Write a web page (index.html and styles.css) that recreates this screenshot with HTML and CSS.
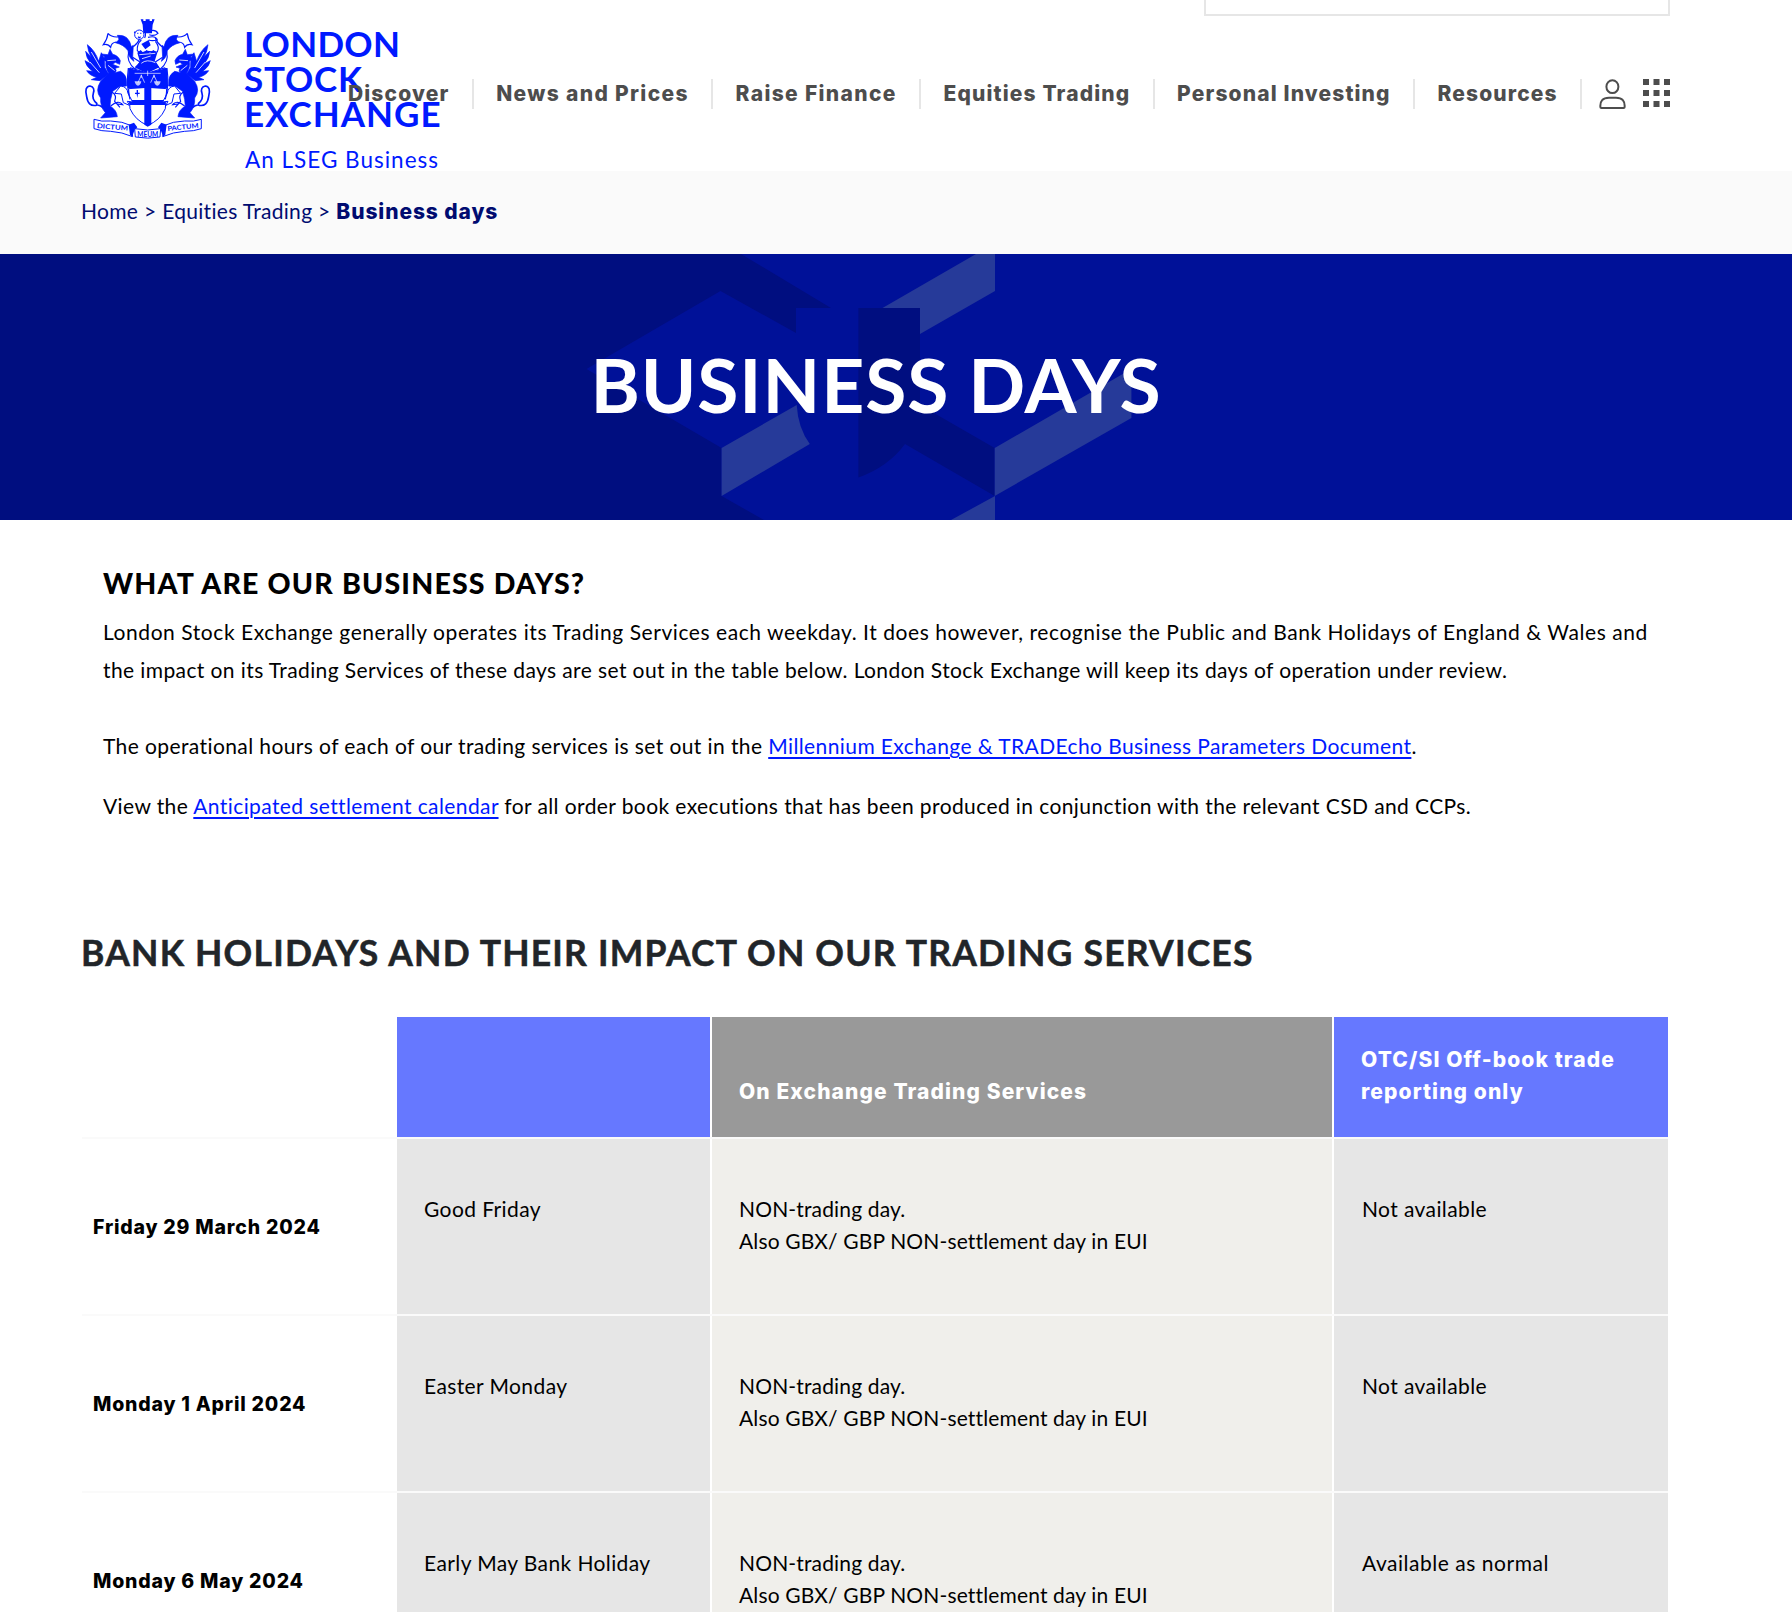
FILE: index.html
```html
<!DOCTYPE html>
<html lang="en">
<head>
<meta charset="utf-8">
<title>Business days</title>
<link rel="stylesheet" href="styles.css">
</head>
<body>
<header class="header">
  <div class="logo">
    <svg class="crest" viewBox="0 0 406 396" aria-hidden="true">
      <defs>
        <g id="side">
          <path d="M22 98Q46 116 56 148L64 122Q76 140 74 166L86 186 60 206 34 203 50 196Q28 190 20 176L38 178Q18 164 15 146L34 156Q18 138 17 118L33 134Q24 118 22 98Z" class="f"/>
          <path d="M64 126L84 128 90 112 98 127Q114 130 121 146L119 157 106 151 98 157 118 165 106 169Q112 178 104 182L122 178Q138 188 139 202L140 222 118 224 98 238 92 262 90 282Q110 294 112 314L62 318 76 302Q60 284 62 258 44 236 62 208L86 184Q74 164 78 148L64 142 74 135Z" class="f"/>
          <path d="M122 222Q142 224 144 244L158 270 142 268 148 280 130 272 124 246 104 244Z" class="o"/>
          <path d="M92 282Q116 262 128 278L112 276M96 240Q112 250 104 268L120 286" class="s"/>
          <path d="M82 146L108 144M84 160L104 176M34 120L62 168M30 150L58 182" class="w"/>
          <path d="M70 288Q56 276 48 280 24 284 20 254 12 224 30 222 46 226 40 244 34 262 52 276" class="s tail"/>
          <path d="M84 64Q82 82 70 98 84 94 92 106 94 92 108 90M84 64Q96 78 120 74" class="s"/>
          <path d="M112 70Q146 66 154 104L160 100 158 136 162 148Q146 138 144 116 132 98 106 92 124 84 112 70Z" class="f"/>
          <path d="M160 104Q174 94 180 78M146 120Q138 150 166 172L180 150 158 136" class="s"/>
          <path d="M145 174L152 168 180 176 203 184M145 168Q138 220 150 262" class="s"/>
          <path d="M42 322Q64 330 92 327 128 328 154 341L158 374Q126 360 92 358 64 358 42 350Z" class="o"/>
          <path d="M146 338L162 332 172 346 164 354 156 374 150 368Z"/>
          <path d="M184 188L184 198M174 212L184 190 194 212" class="wt"/>
          <path d="M164 208H184Q182 220 174 221 166 220 164 208Z" class="wf"/>
        </g>
      </defs>
      <path d="M146 230L203 226 260 230 256 290Q240 326 203 340 166 326 150 290Z" class="o"/>
      <path d="M145 168L203 182 261 168 264 228H143ZM193 226H214V338L203 344 193 338ZM150 264H256V279H150ZM170 234H174V242H179V246H174L172 258 170 246H165V242H170Z"/>
      <use href="#side"/>
      <use href="#side" transform="matrix(-1 0 0 1 406 0)"/>
      <path d="M182 22H190V27H197V22H209V27H216V22H224L218 38 216 64H190L188 38Z"/>
      <circle cx="178" cy="68" r="14" class="o"/>
      <path d="M172 64h3M181 64h3M174 74l4 3 4-3M166 58l-3 5M192 56Q200 64 194 78M196 48H210M206 58Q226 50 234 64 222 74 208 68M204 76Q228 70 232 84 216 88 206 84M184 84Q170 96 172 116L182 124 200 118 232 120Q240 104 226 88" class="s"/>
      <path d="M184 96L206 84 212 100 196 112ZM172 122L182 114 190 122 200 114 210 122 220 114 232 122 224 148 238 166 214 178 203 184 184 176 164 166 180 150Z"/>
      <path d="M178 128L226 124M184 154Q200 140 226 152M186 140L212 132" class="w"/>
      <path d="M164 184H242M203 176V192" class="wt"/>
      <path d="M164 350Q203 358 242 350L240 375Q203 382 166 375Z" class="o"/>
      <text x="50" y="348" class="motto" textLength="94" lengthAdjust="spacingAndGlyphs" transform="rotate(5 50 348)">DICTUM</text>
      <text x="172" y="374" class="motto" textLength="63" lengthAdjust="spacingAndGlyphs">MEUM</text>
      <text x="263" y="357" class="motto" textLength="94" lengthAdjust="spacingAndGlyphs" transform="rotate(-6 263 357)">PACTUM</text>
    </svg>
    <div class="logo-text">
      <div>LONDON</div>
      <div class="logo-stock">STOCK</div>
      <div class="logo-exchange">EXCHANGE</div>
      <div class="logo-sub">An LSEG Business</div>
    </div>
  </div>
  <div class="search"></div>
  <nav class="nav">
    <a>Discover</a>
    <a class="wide">News and Prices</a>
    <a class="wide">Raise Finance</a>
    <a>Equities Trading</a>
    <a>Personal Investing</a>
    <a>Resources</a>
    <svg class="user" viewBox="0 0 28 30"><ellipse cx="13.4" cy="7.7" rx="6" ry="6.4"/><path d="M1.4 28.2Q.6 18.8 10 18.8H17Q26.4 18.8 25.6 28.2Q25.6 29 24.6 29H2.4Q1.4 29 1.4 28.2Z"/></svg>
    <svg class="apps" viewBox="0 0 27 28"><path d="M0 0h6v6H0zM10.5 0h6v6h-6zM21 0h6v6h-6zM0 11h6v6H0zM10.5 11h6v6h-6zM21 11h6v6h-6zM0 22h6v6H0zM10.5 22h6v6h-6zM21 22h6v6h-6z"/></svg>
  </nav>
</header>
<div class="breadcrumb"><span class="crumbs">Home &gt; Equities Trading &gt; </span><b>Business days</b></div>
<section class="hero">
  <svg class="hero-art" viewBox="0 0 1792 266" preserveAspectRatio="none" aria-hidden="true">
    <path fill="#001198" d="M741 0L831 54H796V79L720.500 37 586.500 115 721.600 194V242L764 266H1792V0Z"/>
    <path fill="#000e80" d="M858.400 54H920V151L994.700 194V242L905 190Q888 213 858.400 223.500Z"/>
    <path fill="#263a99" d="M976 0H995V37L920 80V54H882.500ZM994.700 194L1131.400 115V164L994.700 242ZM721.600 194L796.700 151Q798 174 809.800 190L721.600 242ZM995 242V266H951Z"/>
  </svg>
  <h1>BUSINESS DAYS</h1>
</section>
<main class="main">
  <section class="intro">
    <h3>WHAT ARE OUR BUSINESS DAYS?</h3>
    <p><span class="lead">London Stock Exchange generally operates its Trading Services each weekday. It does however, recognise the Public and Bank Holidays of England &amp; Wales and</span><br>the impact on its Trading Services of these days are set out in the table below. London Stock Exchange will keep its days of operation under review.</p>
    <p class="hours">The operational hours of each of our trading services is set out in the <a>Millennium Exchange &amp; TRADEcho Business Parameters Document</a>.</p>
    <p class="settle">View the <a>Anticipated settlement calendar</a> for all order book executions that has been produced in conjunction with the relevant CSD and CCPs.</p>
  </section>
  <h2>BANK HOLIDAYS AND THEIR IMPACT ON OUR TRADING SERVICES</h2>
  <div class="table">
    <div class="row head"><div></div><div class="blue"></div><div class="grey">On Exchange Trading Services</div><div class="blue">OTC/SI Off-book trade<br>reporting only</div></div>
    <div class="row"><div class="date">Friday 29 March 2024</div><div class="name">Good Friday</div><div class="exch">NON-trading day.<br>Also GBX/ GBP NON-settlement day in EUI</div><div class="otc">Not available</div></div>
    <div class="row"><div class="date">Monday 1 April 2024</div><div class="name">Easter Monday</div><div class="exch">NON-trading day.<br>Also GBX/ GBP NON-settlement day in EUI</div><div class="otc">Not available</div></div>
    <div class="row"><div class="date">Monday 6 May 2024</div><div class="name">Early May Bank Holiday</div><div class="exch">NON-trading day.<br>Also GBX/ GBP NON-settlement day in EUI</div><div class="otc normal">Available as normal</div></div>
  </div>
</main>
</body>
</html>
```
FILE: styles.css
```css
*{box-sizing:border-box}
body{margin:0;height:1612px;overflow:hidden;background:#fff;color:#000;font:21px/32px Lato,"Open Sans",sans-serif;font-variant-ligatures:none}
h1,h2,h3,p{margin:0}
.header{display:grid;grid-template-columns:1588px;grid-template-rows:16px 63px 92px;height:171px;padding-left:82px}
.logo{grid-area:1/1/4/2;display:flex;align-items:flex-start;color:#0019ff}
.crest{width:135.3px;height:132px;margin:12px 28.7px 0 -2px;fill:#0019ff;flex:none}
.crest .f{stroke:#0019ff;stroke-width:2}
.crest .o{fill:#fff;stroke:#0019ff;stroke-width:3}
.crest .s{fill:none;stroke:#0019ff;stroke-width:3.4}
.crest .tail{stroke-width:5}
.crest .w{fill:none;stroke:#fff;stroke-width:2.4}
.crest .wt{fill:none;stroke:#fff;stroke-width:2}
.crest .wf{fill:#fff;opacity:.75}
.crest .motto{font:700 20px Lato,sans-serif;fill:#0019ff}
.logo-text{padding-top:26px;font-size:35px;font-weight:700;line-height:35px;letter-spacing:.3px;white-space:nowrap}
.logo-stock{letter-spacing:.8px}
.logo-exchange{letter-spacing:1px}
.logo-sub{margin:16px 0 0 1px;font-size:22.5px;font-weight:400;line-height:26px;letter-spacing:1px}
.search{grid-area:1/1;justify-self:end;width:466px;border:solid #e6e6e6;border-width:0 2px 2px}
.nav{grid-area:3/1;justify-self:end;display:flex;height:30px;font:800 21px/30px Inter,sans-serif;letter-spacing:1.14px;color:#4d4d4d;white-space:nowrap}
.nav a{box-sizing:content-box;padding:0 22.25px 0 22.5px;border-right:2px solid #e6e6e6}
.nav .wide{letter-spacing:1.34px}
.user{width:28px;height:30px;margin:0 16px 0 17px;fill:none;stroke:#4d4d4d;stroke-width:2}
.apps{width:27px;height:28px;fill:#4d4d4d}
.breadcrumb{height:83px;padding-left:81px;background:#fafafa;color:#000b70;line-height:80px;letter-spacing:.32px;white-space:pre}
.breadcrumb b{font:800 21px/80px Inter,sans-serif;letter-spacing:.9px}
.hero{display:grid;height:266px;background:#000e80;color:#fff}
.hero-art{grid-area:1/1;width:100%;height:266px}
.hero h1{grid-area:1/1;z-index:1;padding:0 122px 0 82px;text-align:center;font-size:75px;line-height:261px;letter-spacing:.9px}
.main{padding-left:82px;width:1668px}
.intro{padding:46px 0 0 21px;line-height:38px;letter-spacing:.4px;white-space:nowrap}
.intro h3{margin-bottom:13px;font-size:28.5px;font-weight:900;line-height:34px;letter-spacing:1.18px}
.intro a{color:#0019ff;text-decoration:underline;text-decoration-thickness:2px;text-underline-offset:3px}
.lead{letter-spacing:.56px}
.hours{margin-top:38px}
.settle{margin-top:22px}
h2{margin:107px 0 43px -1px;color:#212529;font-size:35.5px;line-height:42px;letter-spacing:1.22px;-webkit-text-stroke:.5px #212529;white-space:nowrap}
.row{display:grid;grid-template-columns:313px 313px 620px 334px;column-gap:2px;height:177px;border-bottom:2px solid #fafafa}
.row>div{padding:54px 0 0 27px;white-space:nowrap}
.row .date{display:flex;align-items:center;padding:0 0 0 11px;font:800 19.5px/32px Inter,sans-serif;letter-spacing:.8px}
.name,.otc{background:#e6e6e6;letter-spacing:.4px}
.row .otc{padding-left:28px}
.normal{letter-spacing:.53px}
.exch{background:#f0efeb;letter-spacing:.15px}
.head{height:122px}
.row.head>div{align-content:end;padding:0 0 29px 27px;color:#fff;font:800 21px/32px Inter,sans-serif;letter-spacing:1.1px}
.blue{background:#6678ff}
.grey{background:#999}
```
